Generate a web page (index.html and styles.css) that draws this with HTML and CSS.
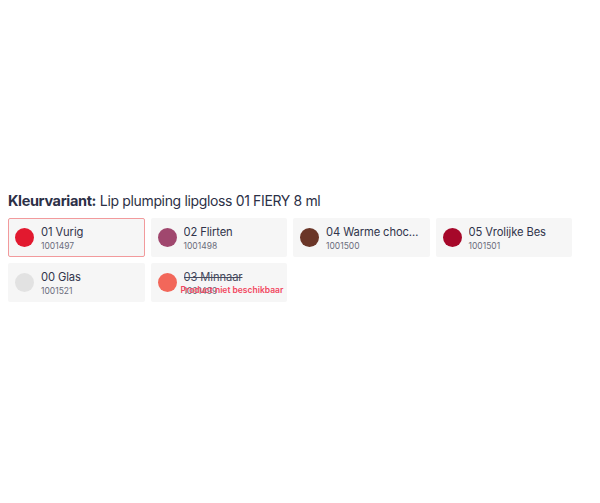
FILE: index.html
```html
<!DOCTYPE html>
<html lang="nl">
<head>
<meta charset="utf-8">
<link rel="stylesheet" href="styles.css">
</head>
<body>
<div class="wrap">
  <h2 class="title"><b>Kleurvariant:</b> <span class="product">Lip plumping lipgloss 01 FIERY 8 ml</span></h2>
  <div class="grid">
    <div class="tile selected">
      <span class="dot" style="background:#e2192f"></span>
      <div class="info"><div class="name">01 Vurig</div><div class="code">1001497</div></div>
    </div>
    <div class="tile">
      <span class="dot" style="background:#a0476e"></span>
      <div class="info"><div class="name">02 Flirten</div><div class="code">1001498</div></div>
    </div>
    <div class="tile">
      <span class="dot" style="background:#6b3628"></span>
      <div class="info"><div class="name">04 Warme chocolade</div><div class="code">1001500</div></div>
    </div>
    <div class="tile">
      <span class="dot" style="background:#a6082a"></span>
      <div class="info"><div class="name">05 Vrolijke Bes</div><div class="code">1001501</div></div>
    </div>
    <div class="tile">
      <span class="dot" style="background:#e2e2e2"></span>
      <div class="info"><div class="name">00 Glas</div><div class="code">1001521</div></div>
    </div>
    <div class="tile unavailable">
      <span class="dot" style="background:#f2675a"></span>
      <div class="info"><div class="name">03 Minnaar</div><div class="code">1001499</div></div>
      <span class="badge">Product niet beschikbaar</span>
    </div>
  </div>
</div>
</body>
</html>
```
FILE: styles.css
```css
html, body {
  margin: 0;
  padding: 0;
  background: #ffffff;
}
body {
  font-family: Inter, "Noto Sans", sans-serif;
  color: #2c3046;
}
.wrap {
  padding: 192px 8px 0 8px;
}
.title {
  margin: 0;
  font-size: 14.5px;
  line-height: 18px;
  font-weight: 400;
  letter-spacing: -0.35px;
}
.title b {
  font-weight: 700;
}
.title .product {
  font-size: 14px;
  letter-spacing: -0.35px;
}
.grid {
  margin-top: 8px;
  display: grid;
  grid-template-columns: repeat(4, 136.5px);
  column-gap: 6px;
  row-gap: 6px;
}
.tile {
  position: relative;
  box-sizing: border-box;
  height: 39px;
  background: #f6f6f6;
  border: 1px solid transparent;
  border-radius: 2px;
  display: flex;
  align-items: center;
  padding: 0 6px 0 6px;
  gap: 7px;
  min-width: 0;
}
.tile.selected {
  border-color: #f29a9c;
}
.dot {
  flex: 0 0 19px;
  width: 19px;
  height: 19px;
  border-radius: 50%;
}
.info {
  min-width: 0;
  flex: 1;
  display: flex;
  flex-direction: column;
  gap: 2px;
  padding-top: 2px;
}
.name {
  font-size: 11.2px;
  line-height: 13px;
  letter-spacing: -0.1px;
  color: #30344b;
  white-space: nowrap;
  overflow: hidden;
  text-overflow: ellipsis;
}
.code {
  font-size: 8.5px;
  line-height: 11px;
  color: #6a6c7c;
}
.unavailable .name {
  text-decoration: line-through;
  color: #464a5e;
}
.badge {
  position: absolute;
  left: 29px;
  top: 21px;
  font-size: 8.5px;
  line-height: 11px;
  font-weight: 600;
  color: #f2475f;
  white-space: nowrap;
}
```
